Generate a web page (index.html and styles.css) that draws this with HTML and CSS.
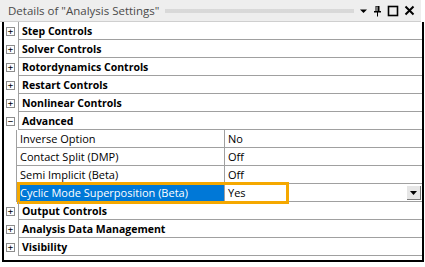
FILE: index.html
```html
<!DOCTYPE html>
<html lang="en">

<head>
    <meta charset="UTF-8">
    <title>Details of "Analysis Settings"</title>
    <link rel="stylesheet" href="styles.css">
</head>

<body>
    <div class="panel">
        <div class="titlebar">
            <span class="title">Details of "Analysis Settings"</span>
            <span class="grip"></span>
            <span class="tools">
                <svg width="9" height="6" viewBox="0 0 9 6"><path d="M1 1.5h7L4.5 5z" fill="#000"/></svg>
                <svg width="9" height="12" viewBox="0 0 9 12"><path d="M2.5 1h4v5h1.5v1.5H5v4H4v-4H1V6h1.5z M3.5 1.5v4.5h1v-4.5z" fill="#000" fill-rule="evenodd"/></svg>
                <svg width="12" height="12" viewBox="0 0 12 12"><rect x="1.5" y="1.5" width="9" height="9" fill="none" stroke="#000" stroke-width="1.6"/></svg>
                <svg width="11" height="11" viewBox="0 0 11 11"><path d="M1.5 1.5l8 8M9.5 1.5l-8 8" stroke="#000" stroke-width="2"/></svg>
            </span>
        </div>

        <div class="grid">
            <div class="row group"><span class="toggle">+</span><div class="name">Step Controls</div></div>
            <div class="row group"><span class="toggle">+</span><div class="name">Solver Controls</div></div>
            <div class="row group"><span class="toggle">+</span><div class="name">Rotordynamics Controls</div></div>
            <div class="row group"><span class="toggle">+</span><div class="name">Restart Controls</div></div>
            <div class="row group"><span class="toggle">+</span><div class="name">Nonlinear Controls</div></div>
            <div class="row group"><span class="toggle">&minus;</span><div class="name">Advanced</div></div>
            <div class="row"><span class="toggle empty"></span><div class="name">Inverse Option</div><div class="value">No</div></div>
            <div class="row"><span class="toggle empty"></span><div class="name">Contact Split (DMP)</div><div class="value">Off</div></div>
            <div class="row"><span class="toggle empty"></span><div class="name">Semi Implicit (Beta)</div><div class="value">Off</div></div>
            <div class="row selected">
                <span class="toggle empty"></span>
                <div class="name">Cyclic Mode Superposition (Beta)</div>
                <div class="value">Yes<span class="combo"><svg width="7" height="4" viewBox="0 0 7 4"><path d="M0 0h7L3.5 4z" fill="#000"/></svg></span></div>
                <span class="highlight"></span>
            </div>
            <div class="row group"><span class="toggle">+</span><div class="name">Output Controls</div></div>
            <div class="row group"><span class="toggle">+</span><div class="name">Analysis Data Management</div></div>
            <div class="row group"><span class="toggle">+</span><div class="name">Visibility</div></div>
        </div>
    </div>
</body>

</html>
```

FILE: styles.css
```css
/* Page */
body {
    margin: 0;
    background: #fff;
    font-family: "Open Sans", "Noto Sans", sans-serif;
    font-size: 11px;
    color: #000;
}

.panel {
    width: 425px;
    height: 267px;
}

/* Title bar */
.titlebar {
    width: 421px;
    height: 22px;
    display: flex;
    align-items: center;
    background: #eeeeee;
    border-bottom: 1px solid #cfcfcf;
    box-sizing: border-box;
    padding-left: 8px;
}

.title {
    color: #4a4a4a;
    font-size: 11.5px;
    white-space: nowrap;
}

.grip {
    flex: 1;
    height: 4px;
    margin: 0 5px 0 6px;
    background-image: radial-gradient(circle, #cdcdcd 0.6px, transparent 0.9px);
    background-size: 2px 2px;
}

.tools {
    display: flex;
    align-items: center;
    gap: 5px;
    padding-right: 6px;
}

.tools svg {
    display: block;
}

/* Property grid */
.grid {
    position: relative;
    width: 418px;
    margin-left: 2px;
    border: 2px solid #000;
    border-top: 0;
    padding-bottom: 4px;
}

.row {
    position: relative;
    display: flex;
    height: 18px;
}

.toggle {
    width: 12px;
    flex: none;
}

.group .toggle {
    display: flex;
    align-items: center;
    justify-content: center;
    font-family: "DejaVu Sans Mono", monospace;
    font-size: 9px;
    line-height: 7px;
    width: 7px;
    height: 7px;
    margin: 5px 3px 0 2px;
    border: 1px solid #8c8c8c;
}

.name,
.value {
    display: flex;
    align-items: center;
    border-bottom: 1px solid #a0a0a0;
    border-left: 1px solid #a0a0a0;
    padding-left: 3px;
    white-space: nowrap;
}

.name {
    flex: 1;
}

.group .name {
    font-weight: bold;
    font-size: 10.5px;
}

.row:not(.group) .name {
    flex: none;
    width: 204px;
}

.value {
    flex: 1;
    position: relative;
}

/* Selected row */
.selected .name {
    background: #0078d7;
    color: #fff;
}

.combo {
    position: absolute;
    right: 1px;
    top: 2px;
    width: 14px;
    height: 14px;
    display: flex;
    align-items: center;
    justify-content: center;
    background: #e6e6e6;
    border-bottom: 1px solid #7a7a7a;
    border-right: 1px solid #7a7a7a;
    box-sizing: border-box;
}

.highlight {
    position: absolute;
    left: 13px;
    top: -2px;
    width: 272px;
    height: 22px;
    border: 3px solid #f5a800;
    box-sizing: border-box;
    pointer-events: none;
}
```
